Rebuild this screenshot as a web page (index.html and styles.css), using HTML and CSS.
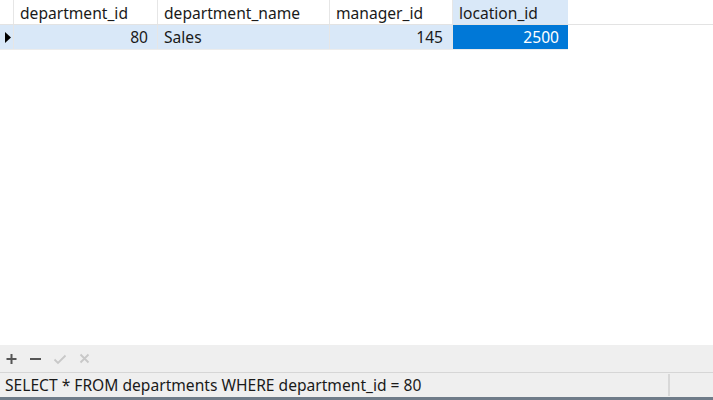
FILE: index.html
```html
<!DOCTYPE html>
<html>
<head>
<meta charset="utf-8">
<link rel="stylesheet" href="styles.css">
</head>
<body>
<div class="app">
  <div class="grid">
    <div class="row head">
      <div class="cell marker"></div>
      <div class="cell c1">department_id</div>
      <div class="cell c2">department_name</div>
      <div class="cell c3">manager_id</div>
      <div class="cell c4 hl">location_id</div>
    </div>
    <div class="row data">
      <div class="cell marker"><svg width="6" height="11" viewBox="0 0 6 11"><path d="M0 0 L6 5.5 L0 11 Z" fill="#000"/></svg></div>
      <div class="cell c1 num">80</div>
      <div class="cell c2">Sales</div>
      <div class="cell c3 num">145</div>
      <div class="cell c4 num sel">2500</div>
    </div>
  </div>
  <div class="spacer"></div>
  <div class="toolbar">
    <svg class="tb" width="13" height="14" viewBox="0 0 13 14"><path d="M6.5 2V12M1.5 7H11.5" stroke="#555" stroke-width="2"/></svg>
    <svg class="tb" width="13" height="14" viewBox="0 0 13 14"><path d="M1 7H12" stroke="#555" stroke-width="2"/></svg>
    <svg class="tb" width="14" height="14" viewBox="0 0 14 14"><path d="M1.5 7.5L5 11L12.5 3.5" stroke="#c8c8c8" stroke-width="1.8" fill="none"/></svg>
    <svg class="tb" width="13" height="14" viewBox="0 0 13 14"><path d="M2.5 2.5L10.5 10.5M10.5 2.5L2.5 10.5" stroke="#c8c8c8" stroke-width="1.8"/></svg>
  </div>
  <div class="status">
    <div class="sql">SELECT * FROM departments WHERE department_id = 80</div>
    <div class="sep"></div>
  </div>
</div>
</body>
</html>
```
FILE: styles.css
```css
html, body {
  margin: 0;
  padding: 0;
  width: 713px;
  height: 400px;
  overflow: hidden;
  background: #fff;
  font-family: "Noto Sans", "Open Sans", sans-serif;
  font-size: 15.6px;
  color: #1a1a1a;
}
.app {
  display: flex;
  flex-direction: column;
  height: 400px;
}
.grid {
  display: flex;
  flex-direction: column;
}
.row {
  display: flex;
  height: 24px;
}
.row.head {
  height: 24px;
  border-bottom: 1px solid #e3e3e3;
}
.row.head .cell { padding-top: 1px; }
.row.data {
  height: 24px;
  border-bottom: 1px solid #ececec;
  width: 568px;
}
.cell {
  box-sizing: border-box;
  height: 100%;
  display: flex;
  align-items: center;
  padding: 0 7px 0 6px;
  border-right: 1px solid #e6e6e6;
  white-space: nowrap;
}
.marker { width: 14px; padding: 0 0 0 5px; }
.c1 { width: 144px; }
.c2 { width: 172px; }
.c3 { width: 123px; }
.c4 { width: 115px; border-right: none; }
.head .hl { background: #d9e8f8; }
.data .cell { background: #d9e8f8; }
.data .cell.sel { background: #0078d7; color: #fff; }
.num { justify-content: flex-end; padding-right: 9px; }
.spacer { flex: 1; }
.toolbar {
  height: 27px;
  background: #efefef;
  border-bottom: 1px solid #d6d6d6;
  display: flex;
  align-items: center;
  gap: 11px;
  padding-left: 5px;
}
.status {
  height: 24px;
  background: #efefef;
  border-bottom: 3px solid #6f7c89;
  display: flex;
  align-items: center;
}
.sql {
  flex: 1;
  padding-left: 5px;
  white-space: nowrap;
}
.sep {
  width: 2px;
  height: 22px;
  background: #d8d8d8;
  margin-right: 43px;
}
```
